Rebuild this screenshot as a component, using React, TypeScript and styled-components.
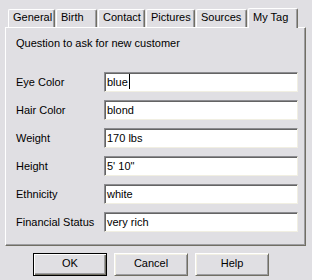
import React from "react";
import styled, { createGlobalStyle } from "styled-components";

const FACE = "#e0dfe3";
const LIGHT = "#f1efe2";
const HILIGHT = "#ffffff";
const SHADOW = "#9d9da1";
const DKSHADOW = "#716f64";

const Global = createGlobalStyle`
  html, body {
    margin: 0;
    padding: 0;
    background: ${FACE};
  }
  body {
    font-family: "Liberation Sans", Arial, sans-serif;
    font-size: 11px;
    color: #000;
  }
`;

const Window = styled.div`
  width: 312px;
  height: 280px;
  background: ${FACE};
  display: flex;
  flex-direction: column;
  box-sizing: border-box;
  padding-top: 8px;
`;

const TabStrip = styled.div`
  position: relative;
  z-index: 1;
  display: flex;
  align-items: flex-end;
  gap: 1px;
  height: 20px;
  margin: 0 0 -1px 8px;
`;

const Tab = styled.div<{ $w: number; $active?: boolean }>`
  box-sizing: border-box;
  width: ${(p) => p.$w}px;
  height: ${(p) => (p.$active ? 20 : 18)}px;
  margin-bottom: ${(p) => (p.$active ? 0 : 1)}px;
  background: ${FACE};
  border-top: 1px solid ${HILIGHT};
  border-left: 1px solid ${HILIGHT};
  border-right: 1px solid ${DKSHADOW};
  border-bottom: none;
  border-radius: 2px 2px 0 0;
  box-shadow: inset -1px 0 0 ${SHADOW};
  padding: ${(p) => (p.$active ? 2 : 1)}px 0 0 4px;
  line-height: 13px;
  white-space: nowrap;
`;

const Panel = styled.div`
  box-sizing: border-box;
  width: 301px;
  height: 219px;
  margin-left: 5px;
  border-top: 1px solid ${HILIGHT};
  border-left: 1px solid ${HILIGHT};
  border-right: 1px solid ${DKSHADOW};
  border-bottom: 1px solid ${DKSHADOW};
  box-shadow: inset -1px -1px 0 ${SHADOW};
  padding: 9px 6px 0 10px;
  display: flex;
  flex-direction: column;
`;

const Prompt = styled.div`
  line-height: 13px;
  margin-bottom: 22px;
`;

const Form = styled.div`
  display: grid;
  grid-template-columns: 88px 194px;
  grid-auto-rows: 20px;
  row-gap: 8px;
  align-items: center;
`;

const Label = styled.div`
  line-height: 13px;
`;

const Field = styled.div`
  box-sizing: border-box;
  height: 20px;
  background: #fff;
  border-top: 1px solid #8c8c90;
  border-left: 1px solid #8c8c90;
  border-bottom: 1px solid ${LIGHT};
  border-right: 1px solid ${LIGHT};
  box-shadow: inset 1px 1px 0 #646464;
  padding: 3px 0 0 2px;
  line-height: 13px;
  display: flex;
  align-items: flex-start;
  white-space: nowrap;
`;

const Caret = styled.span`
  display: inline-block;
  width: 1px;
  height: 15px;
  margin: -2px 0 0 1px;
  background: #000;
`;

const ButtonRow = styled.div`
  display: flex;
  gap: 7px;
  margin: 7px 0 0 33px;
`;

const Button = styled.div<{ $default?: boolean }>`
  box-sizing: border-box;
  width: 74px;
  height: 23px;
  display: flex;
  align-items: center;
  justify-content: center;
  line-height: 13px;
  padding-bottom: 2px;
  background: ${FACE};
  border: 1px solid;
  border-color: ${(p) =>
    p.$default ? "#000" : `${HILIGHT} ${DKSHADOW} ${DKSHADOW} ${HILIGHT}`};
  box-shadow: ${(p) =>
    p.$default
      ? `inset 1px 1px 0 ${HILIGHT}, inset -1px -1px 0 ${DKSHADOW}, inset -2px -2px 0 ${SHADOW}`
      : `inset 1px 1px 0 ${LIGHT}, inset -1px -1px 0 ${SHADOW}`};
`;

const tabs: { label: string; w: number; active?: boolean }[] = [
  { label: "General", w: 47 },
  { label: "Birth", w: 41 },
  { label: "Contact", w: 47 },
  { label: "Pictures", w: 49 },
  { label: "Sources", w: 51 },
  { label: "My Tag", w: 50, active: true },
];

const fields: { label: string; value: string; caret?: boolean }[] = [
  { label: "Eye Color", value: "blue", caret: true },
  { label: "Hair Color", value: "blond" },
  { label: "Weight", value: "170 lbs" },
  { label: "Height", value: "5' 10\"" },
  { label: "Ethnicity", value: "white" },
  { label: "Financial Status", value: "very rich" },
];

export default function App() {
  return (
    <>
      <Global />
      <Window>
        <TabStrip>
          {tabs.map((t) => (
            <Tab key={t.label} $w={t.w} $active={t.active}>
              {t.label}
            </Tab>
          ))}
        </TabStrip>
        <Panel>
          <Prompt>Question to ask for new customer</Prompt>
          <Form>
            {fields.map((f) => (
              <React.Fragment key={f.label}>
                <Label>{f.label}</Label>
                <Field>
                  {f.value}
                  {f.caret && <Caret />}
                </Field>
              </React.Fragment>
            ))}
          </Form>
        </Panel>
        <ButtonRow>
          <Button $default>OK</Button>
          <Button>Cancel</Button>
          <Button>Help</Button>
        </ButtonRow>
      </Window>
    </>
  );
}
